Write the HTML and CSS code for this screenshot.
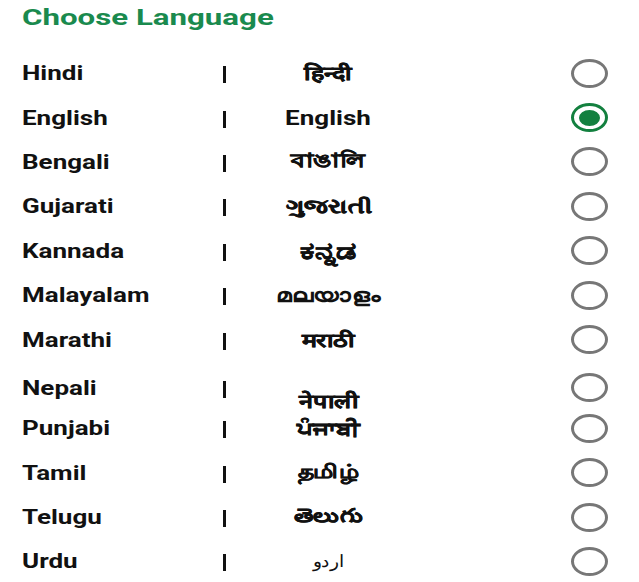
FILE: index.html
```html
<!DOCTYPE html>
<html lang="en">
<head>
    <meta charset="UTF-8">
    <meta name="viewport" content="width=device-width, initial-scale=1.0">
    <title>Choose Language</title>
    <link rel="stylesheet" href="styles.css">
</head>
<body>
    <div class="container">
        <h1><span class="title">Choose Language</span></h1>
        <ul class="language-list">
            <li class="language-row">
                <span class="name">Hindi</span><span class="bar"></span>
                <span class="native"><span>हिन्दी</span></span><span class="radio"></span>
            </li>
            <li class="language-row">
                <span class="name">English</span><span class="bar"></span>
                <span class="native latin"><span>English</span></span><span class="radio checked"></span>
            </li>
            <li class="language-row">
                <span class="name">Bengali</span><span class="bar"></span>
                <span class="native thin"><span>বাঙালি</span></span><span class="radio"></span>
            </li>
            <li class="language-row">
                <span class="name">Gujarati</span><span class="bar"></span>
                <span class="native thin"><span>ગુજરાતી</span></span><span class="radio"></span>
            </li>
            <li class="language-row">
                <span class="name">Kannada</span><span class="bar"></span>
                <span class="native thin kannada"><span>ಕನ್ನಡ</span></span><span class="radio"></span>
            </li>
            <li class="language-row">
                <span class="name">Malayalam</span><span class="bar"></span>
                <span class="native heavy"><span>മലയാളം</span></span><span class="radio"></span>
            </li>
            <li class="language-row">
                <span class="name">Marathi</span><span class="bar"></span>
                <span class="native"><span>मराठी</span></span><span class="radio"></span>
            </li>
            <li class="language-row">
                <span class="name">Nepali</span><span class="bar"></span>
                <span class="native low"><span>नेपाली</span></span><span class="radio"></span>
            </li>
            <li class="language-row">
                <span class="name">Punjabi</span><span class="bar"></span>
                <span class="native"><span>ਪੰਜਾਬੀ</span></span><span class="radio"></span>
            </li>
            <li class="language-row">
                <span class="name">Tamil</span><span class="bar"></span>
                <span class="native"><span>தமிழ்</span></span><span class="radio"></span>
            </li>
            <li class="language-row">
                <span class="name">Telugu</span><span class="bar"></span>
                <span class="native telugu"><span>తెలుగు</span></span><span class="radio"></span>
            </li>
            <li class="language-row">
                <span class="name">Urdu</span><span class="bar"></span>
                <span class="native urdu"><span>اردو</span></span><span class="radio"></span>
            </li>
        </ul>
    </div>
</body>
</html>
```

FILE: styles.css
```css
* {
    box-sizing: border-box;
}

body {
    margin: 0;
    padding: 0;
    background-color: #ffffff;
    font-family: Roboto, "Liberation Sans", Arial, sans-serif;
    color: #111111;
}

.container {
    padding: 4px 30px 0 22px;
}

h1 {
    margin: 0 0 19px 0;
    font-size: 22px;
    line-height: 28px;
    font-weight: 700;
    color: #1a8a4e;
}

/* the app draws its text wide, so stretch the glyphs sideways */
.title {
    display: inline-block;
    transform: scaleX(1.42);
    transform-origin: left center;
}

.language-list {
    list-style: none;
    margin: 0;
    padding: 0;
}

.language-row {
    display: grid;
    grid-template-columns: 201px 6px 198px 1fr 38px;
    align-items: center;
    height: 44.4px;
    font-size: 20px;
    font-weight: 700;
}

.name {
    justify-self: start;
    transform: scaleX(1.3);
    transform-origin: left center;
}

/* short separator between the two names */
.bar {
    grid-column: 2;
    width: 3px;
    height: 17px;
    margin-top: 3px;
    background-color: #111111;
}

.native {
    grid-column: 3;
    text-align: center;
    font-size: 19px;
    -webkit-text-stroke: 0.4px #111111;
}

.native span {
    display: inline-block;
    transform: scaleX(1.32);
}

/* scripts whose font has no bold face */
.native.thin {
    -webkit-text-stroke: 0.6px #111111;
}

/* these already come out bold */
.native.heavy {
    -webkit-text-stroke: 0;
}

.native.telugu {
    -webkit-text-stroke: 0.25px #111111;
}

.native.kannada {
    font-size: 24px;
}

.native.latin {
    font-size: 20px;
    -webkit-text-stroke: 0;
}

.native.latin span {
    transform: scaleX(1.3);
}

.native.low {
    margin-top: 26px;
}

.native.urdu {
    font-weight: 400;
    font-size: 17px;
    -webkit-text-stroke: 0;
}

.native.urdu span {
    transform: scaleX(1.1);
}

.radio {
    grid-column: 5;
    width: 37px;
    height: 29px;
    border: 3px solid #777777;
    border-radius: 50%;
    display: flex;
    align-items: center;
    justify-content: center;
}

.radio.checked {
    border-color: #13803f;
}

.radio.checked::after {
    content: "";
    width: 21px;
    height: 16px;
    border-radius: 50%;
    background-color: #13803f;
}
```
